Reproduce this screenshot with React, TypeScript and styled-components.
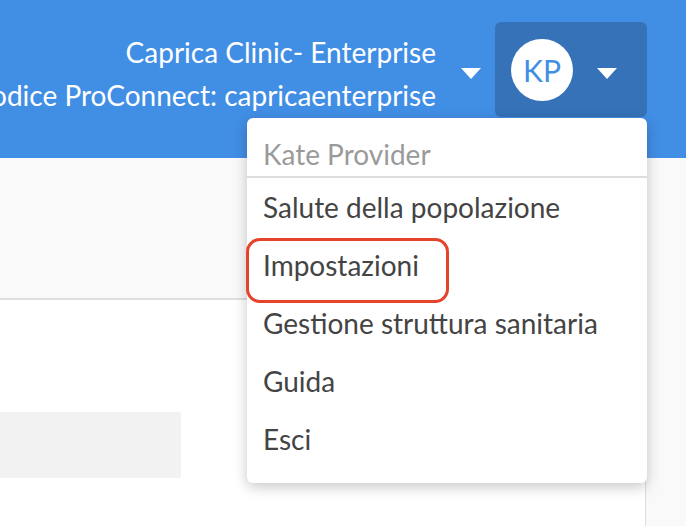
import { createGlobalStyle, styled } from "styled-components";

const GlobalStyle = createGlobalStyle`
  html, body {
    margin: 0;
    padding: 0;
    background: #ffffff;
    font-family: Lato, "Open Sans", sans-serif;
  }
  * { box-sizing: border-box; }
`;

/** menu entries under the user name */
const menuItems = [
  "Salute della popolazione",
  "Impostazioni",
  "Gestione struttura sanitaria",
  "Guida",
  "Esci",
];

function Caret() {
  return (
    <CaretSvg width="20" height="11" viewBox="0 0 20 11">
      <polygon points="0,0 20,0 10,11" fill="#ffffff" />
    </CaretSvg>
  );
}

export default function App() {
  return (
    <Page>
      <GlobalStyle />
      <Header>
        <ClinicInfo>
          <ClinicLine>Caprica Clinic- Enterprise</ClinicLine>
          <ClinicLine>Codice ProConnect: capricaenterprise</ClinicLine>
        </ClinicInfo>
        <ClinicCaret>
          <Caret />
        </ClinicCaret>
        <UserArea>
          <UserButton>
            <Avatar>KP</Avatar>
            <Caret />
          </UserButton>
          <Dropdown>
            <MenuHeader>Kate Provider</MenuHeader>
            {menuItems.map((item) => (
              <MenuItem key={item}>{item}</MenuItem>
            ))}
            <Highlight />
          </Dropdown>
        </UserArea>
      </Header>
      <Body>
        <Content>
          <TopBand />
          <Placeholder />
        </Content>
        <SidePanel />
      </Body>
    </Page>
  );
}

const Page = styled.div`
  width: 686px;
  height: 526px;
  overflow: hidden;
  display: flex;
  flex-direction: column;
`;

const Header = styled.header`
  height: 158px;
  flex-shrink: 0;
  background: #418ee5;
  display: flex;
  align-items: flex-start;
  justify-content: flex-end;
  padding: 22px 39px 0 0;
  position: relative;
  z-index: 2;
`;

const ClinicInfo = styled.div`
  display: flex;
  flex-direction: column;
  align-items: flex-end;
  padding-top: 9px;
  white-space: nowrap;
`;

const ClinicLine = styled.div`
  color: #ffffff;
  font-size: 28px;
  line-height: 43px;
`;

const ClinicCaret = styled.div`
  display: flex;
  align-items: center;
  height: 95px;
  margin: 0 14px 0 25px;
`;

const CaretSvg = styled.svg`
  display: block;
  margin-top: 8px;
`;

const UserArea = styled.div`
  position: relative;
`;

const UserButton = styled.div`
  width: 152px;
  height: 95px;
  background: #3572b8;
  border-radius: 6px;
  display: flex;
  align-items: center;
  padding-left: 16px;
  gap: 24px;
`;

const Avatar = styled.div`
  width: 62px;
  height: 62px;
  border-radius: 50%;
  background: #ffffff;
  color: #418ee5;
  font-size: 30px;
  display: flex;
  align-items: center;
  justify-content: center;
`;

const Dropdown = styled.div`
  position: absolute;
  top: 96px;
  right: 0;
  width: 400px;
  background: #ffffff;
  border-radius: 6px;
  box-shadow: 0 4px 14px rgba(0, 0, 0, 0.22);
  padding: 14px 0 15px;
`;

const MenuHeader = styled.div`
  height: 46px;
  line-height: 44px;
  padding-left: 16px;
  color: #9a9a9a;
  font-size: 28px;
  border-bottom: 2px solid #dddddd;
`;

const MenuItem = styled.div`
  height: 58px;
  line-height: 58px;
  padding-left: 16px;
  color: #444444;
  font-size: 28px;
  white-space: nowrap;
`;

const Highlight = styled.div`
  position: absolute;
  left: -1px;
  top: 120px;
  width: 203px;
  height: 65px;
  border: 3px solid #e5432b;
  border-radius: 14px;
  pointer-events: none;
`;

const Body = styled.div`
  flex: 1;
  display: flex;
`;

const Content = styled.div`
  flex: 1;
  display: flex;
  flex-direction: column;
`;

const TopBand = styled.div`
  height: 142px;
  background: #f9f9f9;
  border-bottom: 2px solid #dedede;
`;

const Placeholder = styled.div`
  width: 181px;
  height: 66px;
  margin-top: 112px;
  background: #f2f2f2;
  border-radius: 0 2px 2px 0;
`;

const SidePanel = styled.div`
  width: 41px;
  background: #f9f9f9;
  border-left: 1px solid #dddddd;
`;
